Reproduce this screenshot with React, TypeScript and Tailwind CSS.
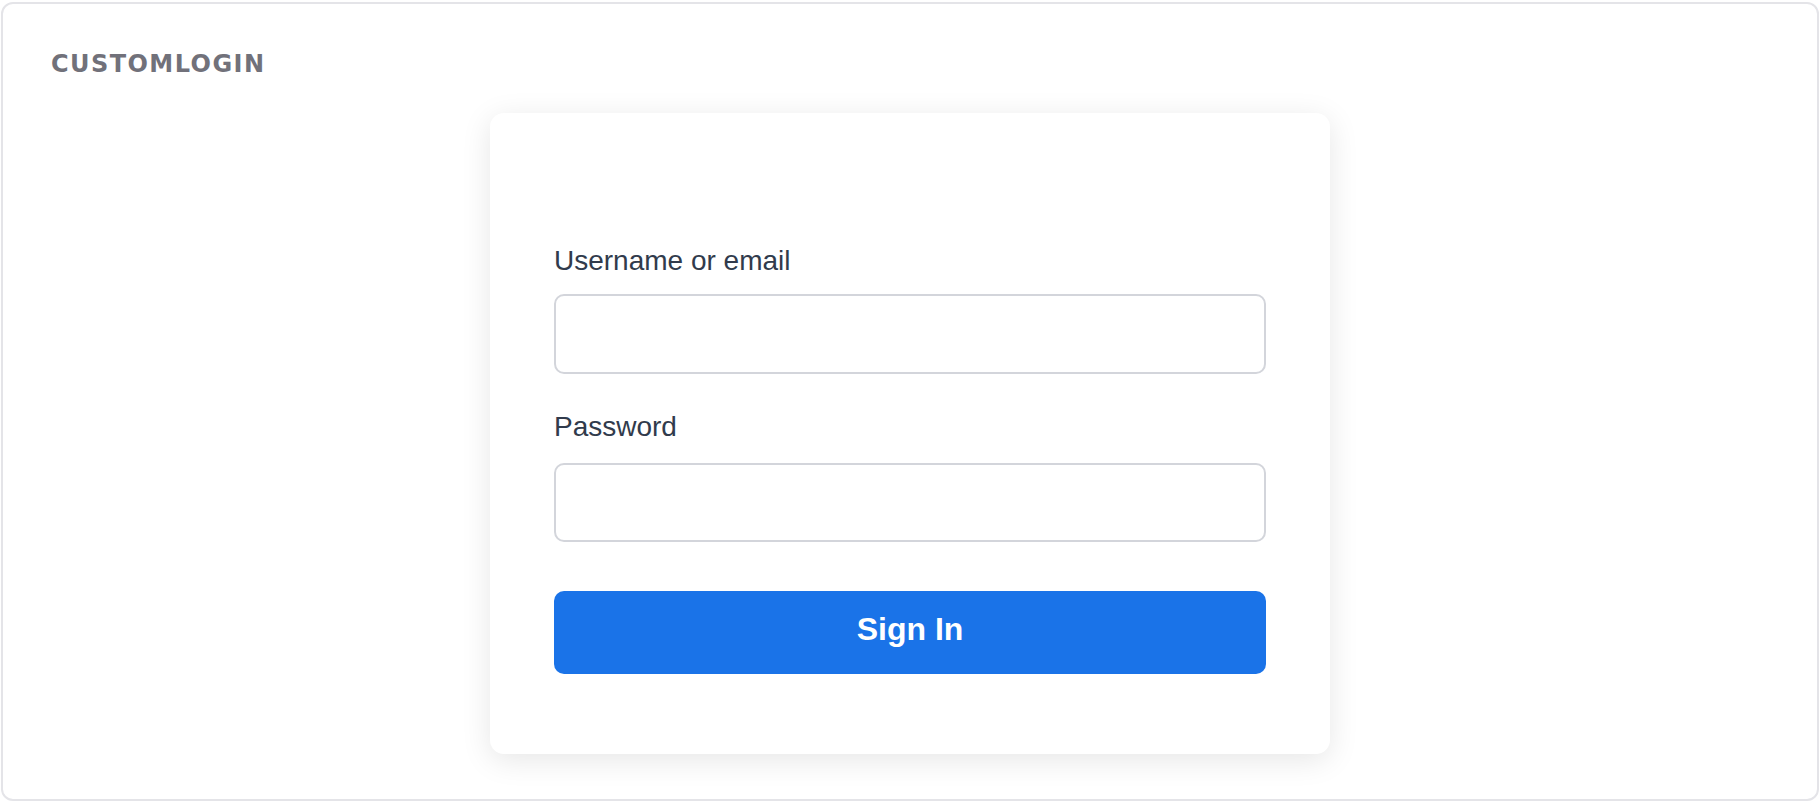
import React from "react";

function Field({
  label,
  type,
  className,
  inputClass,
}: {
  label: string;
  type: string;
  className?: string;
  inputClass: string;
}) {
  return (
    <div className={className}>
      <label className="block text-[28px] leading-[32px] text-[#313b4c]">{label}</label>
      <input
        type={type}
        className={`block w-full rounded-[10px] border-2 border-[#d3d5db] bg-white px-4 text-[24px] outline-none ${inputClass}`}
      />
    </div>
  );
}

export default function App() {
  return (
    <div className="h-[802px] w-full bg-white px-[1px] pt-[2px] pb-[1px] flex font-['Liberation_Sans',Arial,sans-serif]">
      <div className="flex-1 flex flex-col rounded-xl border-2 border-[#e4e4e8] bg-white">
        <div className="px-12 pt-[46px]">
          <span className="font-['DejaVu_Sans',sans-serif] text-[24px] leading-[28px] font-bold tracking-[0.06em] text-[#71717a]">
            CUSTOMLOGIN
          </span>
        </div>
        <div className="flex justify-center mt-[34px]">
          <div className="w-[840px] rounded-[14px] bg-white px-16 pt-[132px] pb-[80px] shadow-[0_6px_30px_rgba(0,0,0,0.10)]">
            <Field label="Username or email" type="text" inputClass="mt-[17px] h-[80px]" />
            <Field label="Password" type="password" className="mt-[37px]" inputClass="mt-[20px] h-[79px]" />
            <button className="mt-[49px] w-full h-[83px] rounded-[10px] bg-[#1a73e8] pb-[8px] text-white text-[32px] font-bold">
              Sign In
            </button>
          </div>
        </div>
      </div>
    </div>
  );
}
